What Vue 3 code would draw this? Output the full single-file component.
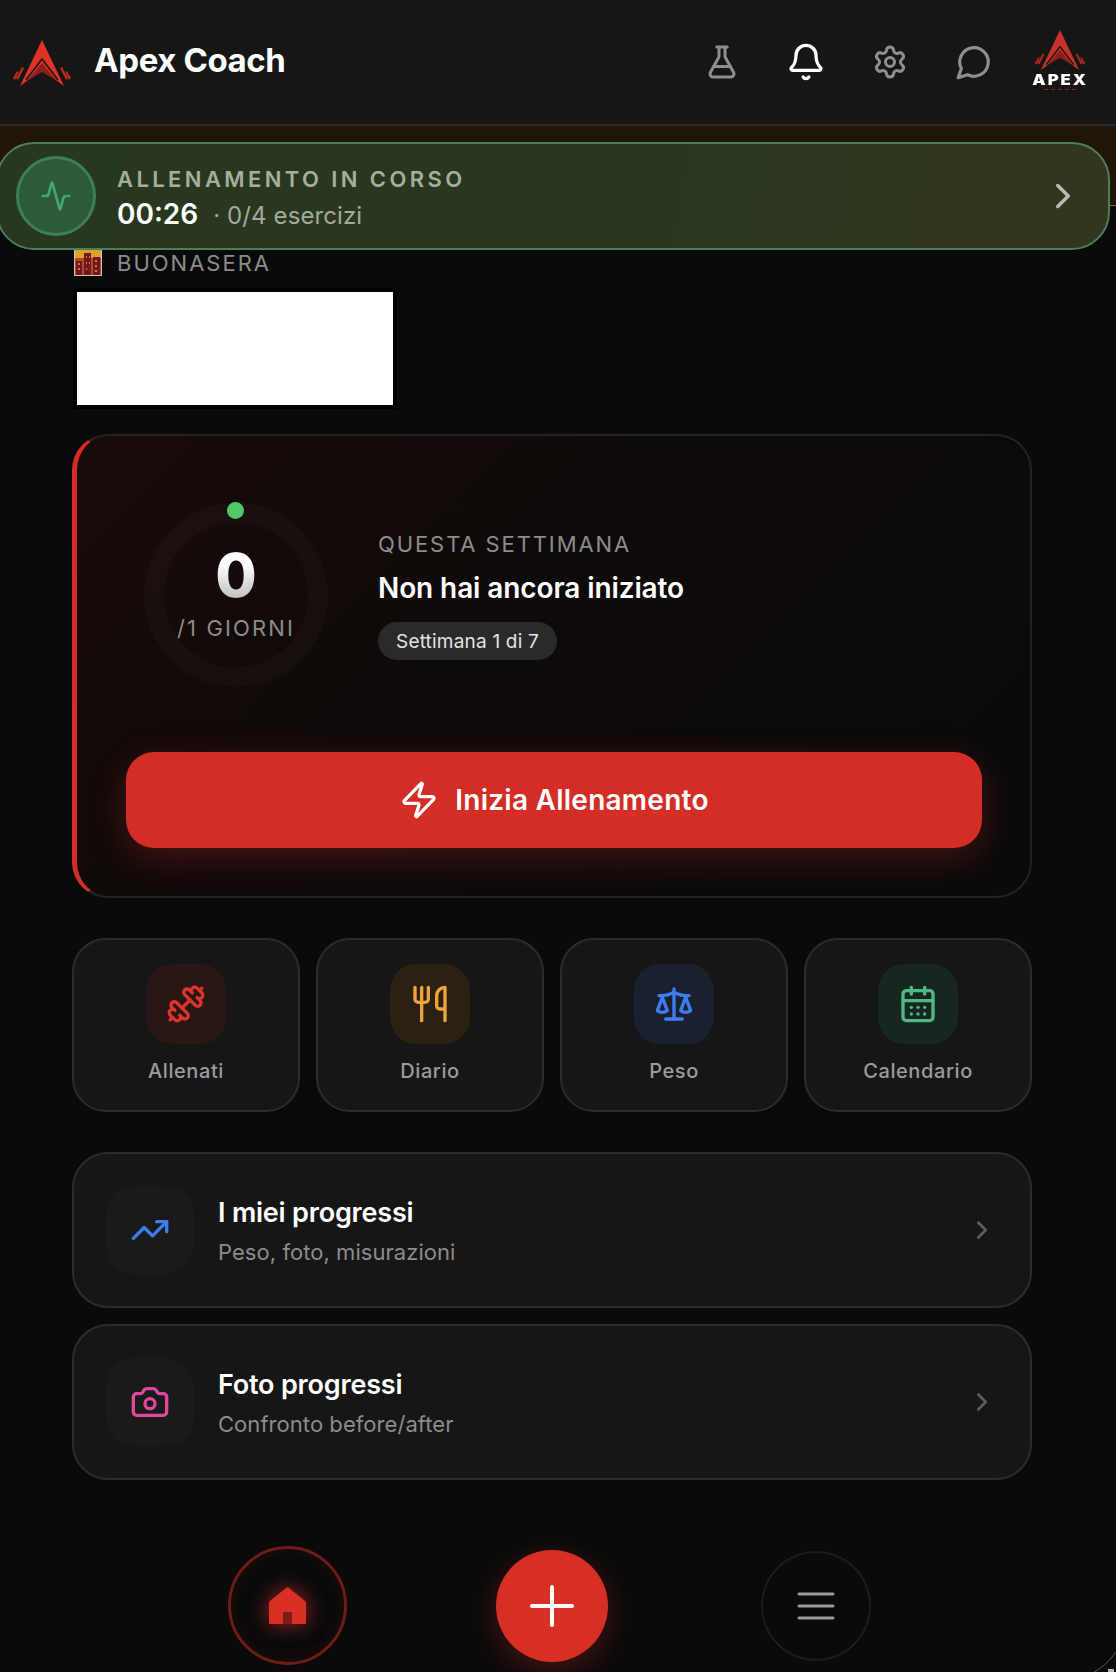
<template>
  <div class="page">
    <header class="topbar">
      <div class="brand">
        <svg class="brand-logo" viewBox="0 0 60 46">
          <path d="M30 0 L52 46 L30 30 L8 46 Z" fill="#dd3329" />
          <path d="M14 40 L30 19 L46 40" fill="none" stroke="#161616" stroke-width="1.6" />
          <path d="M30 23 L44 40 L30 32 L16 40 Z" fill="#8f1f18" />
          <path d="M10 27 L12 28 L6 40 L4 38 Z M5 31 L6.5 32 L3 40 L1 38 Z M50 27 L48 28 L54 40 L56 38 Z M55 31 L53.5 32 L57 40 L59 38 Z" fill="#b92a22" />
        </svg>
        <span class="brand-name">Apex Coach</span>
      </div>
      <div class="top-actions">
        <button v-for="a in topIcons" :key="a.name" class="top-btn">
          <svg :class="a.cls" :width="a.size" :height="a.size" viewBox="0 0 24 24" fill="none" stroke="currentColor" stroke-width="2" stroke-linecap="round" stroke-linejoin="round">
            <path v-for="d in a.paths" :key="d" :d="d" />
          </svg>
        </button>
        <div class="mini-logo">
          <svg viewBox="0 0 60 46" width="52" height="40">
            <path d="M30 0 L52 46 L30 30 L8 46 Z" fill="#c9322a" />
            <path d="M14 40 L30 19 L46 40" fill="none" stroke="#161616" stroke-width="1.6" />
            <path d="M30 23 L44 40 L30 32 L16 40 Z" fill="#8f1f18" />
            <path d="M10 27 L12 28 L6 40 L4 38 Z M5 31 L6.5 32 L3 40 L1 38 Z M50 27 L48 28 L54 40 L56 38 Z M55 31 L53.5 32 L57 40 L59 38 Z" fill="#a82820" />
          </svg>
          <span class="mini-name">APEX</span>
          <span class="mini-line"></span>
        </div>
      </div>
    </header>

    <div class="strip">
      <div class="live-banner">
        <div class="live-icon">
          <svg width="32" height="32" viewBox="0 0 24 24" fill="none" stroke="#45a56f" stroke-width="2" stroke-linecap="round" stroke-linejoin="round">
            <path d="M22 12h-2.48a2 2 0 0 0-1.93 1.46l-2.35 8.36a.25.25 0 0 1-.48 0L9.24 2.18a.25.25 0 0 0-.48 0l-2.35 8.36A2 2 0 0 1 4.49 12H2" />
          </svg>
        </div>
        <div class="live-text">
          <div class="live-title">ALLENAMENTO IN CORSO</div>
          <div class="live-meta">
            <span class="live-time">00:26</span>
            <span class="live-count">· 0/4 esercizi</span>
          </div>
        </div>
        <svg class="live-chevron" width="42" height="42" viewBox="0 0 24 24" fill="none" stroke="#b9bbb2" stroke-width="2" stroke-linecap="round" stroke-linejoin="round">
          <path d="m9 18 6-6-6-6" />
        </svg>
      </div>
    </div>

    <main class="content">
      <div class="greeting">
        <svg class="city" viewBox="0 0 28 26">
          <rect width="28" height="26" fill="#c9c8bb" />
          <rect x="1" y="0" width="26" height="25" fill="#e0a030" />
          <rect x="1" y="8" width="26" height="17" fill="#b5482a" />
          <path d="M2 11h6v14H2z M10 3h7v22h-7z M19 7h7v18h-7z" fill="#70191f" />
          <path d="M4 13h2v2H4z M4 18h2v2H4z M12 6h1v2h-1z M15 6h1v2h-1z M12 12h1v2h-1z M15 12h1v2h-1z M12 18h1v2h-1z M21 10h2v2h-2z M21 15h2v2h-2z M21 20h2v2h-2z" fill="#d9733a" />
        </svg>
        <span>BUONASERA</span>
      </div>
      <div class="name-block"></div>

      <section class="hero">
        <div class="hero-top">
          <div class="ring">
            <span class="ring-dot"></span>
            <div class="ring-num">0</div>
            <div class="ring-label">/1 GIORNI</div>
          </div>
          <div class="week">
            <div class="week-label">QUESTA SETTIMANA</div>
            <div class="week-title">Non hai ancora iniziato</div>
            <span class="week-pill">Settimana 1 di 7</span>
          </div>
        </div>
        <button class="start-btn">
          <svg width="40" height="40" viewBox="0 0 24 24" fill="none" stroke="currentColor" stroke-width="2" stroke-linecap="round" stroke-linejoin="round">
            <path d="M4 14a1 1 0 0 1-.78-1.63l9.9-10.2a.5.5 0 0 1 .86.46l-1.92 6.02A1 1 0 0 0 13 10h7a1 1 0 0 1 .78 1.63l-9.9 10.2a.5.5 0 0 1-.86-.46l1.92-6.02A1 1 0 0 0 11 14z" />
          </svg>
          Inizia Allenamento
        </button>
      </section>

      <section class="quick">
        <div v-for="q in quickItems" :key="q.label" class="quick-card">
          <div class="quick-icon" :style="{ background: q.bg, color: q.color }">
            <svg width="40" height="40" viewBox="0 0 24 24" fill="none" stroke="currentColor" stroke-width="2" stroke-linecap="round" stroke-linejoin="round">
              <g :transform="q.flip ? 'translate(24 0) scale(-1 1)' : null">
                <path v-for="d in q.paths" :key="d" :d="d" />
              </g>
            </svg>
          </div>
          <span class="quick-label">{{ q.label }}</span>
        </div>
      </section>

      <section class="rows">
        <div v-for="r in rows" :key="r.title" class="row-card">
          <div class="row-icon" :style="{ color: r.color }">
            <svg width="40" height="40" viewBox="0 0 24 24" fill="none" stroke="currentColor" stroke-width="2" stroke-linecap="round" stroke-linejoin="round">
              <path v-for="d in r.paths" :key="d" :d="d" />
            </svg>
          </div>
          <div class="row-text">
            <div class="row-title">{{ r.title }}</div>
            <div class="row-sub">{{ r.sub }}</div>
          </div>
          <svg class="row-chevron" width="30" height="30" viewBox="0 0 24 24" fill="none" stroke="#5f5f5f" stroke-width="2" stroke-linecap="round" stroke-linejoin="round">
            <path d="m9 18 6-6-6-6" />
          </svg>
        </div>
      </section>

      <nav class="bottom-nav">
        <button class="nav-home">
          <svg width="37" height="37" viewBox="0 0 37 37">
            <path d="M14 37V24h9v13z" fill="#7a1c18" />
            <path d="M17 1 a2 2 0 0 1 3 0 L36 14 a3 3 0 0 1 1 2 V36 a1 1 0 0 1-1 1 H23 V25 H14 V37 H1 a1 1 0 0 1-1-1 V16 a3 3 0 0 1 1-2 Z" fill="#d92f27" />
          </svg>
        </button>
        <button class="nav-plus">
          <svg width="48" height="48" viewBox="0 0 48 48" fill="none" stroke="#fff" stroke-width="4" stroke-linecap="round">
            <path d="M24 5v38M4 24h40" />
          </svg>
        </button>
        <button class="nav-menu">
          <svg width="38" height="28" viewBox="0 0 38 28" fill="none" stroke="#9a9a9a" stroke-width="3" stroke-linecap="round">
            <path d="M2 2h34M2 14h34M2 26h34" />
          </svg>
        </button>
      </nav>
    </main>

    <svg class="corner" width="24" height="22" viewBox="0 0 24 22" fill="none">
      <path d="M24 2 Q14 16 2 22" stroke="#5a5a5a" stroke-width="1" />
      <rect x="16" y="19" width="6" height="3" fill="#b5b5b5" />
    </svg>
  </div>
</template>

<script setup>
const gear = [
  'M9.671 4.136a2.34 2.34 0 0 1 4.659 0 2.34 2.34 0 0 0 3.319 1.915 2.34 2.34 0 0 1 2.33 4.033 2.34 2.34 0 0 0 0 3.831 2.34 2.34 0 0 1-2.33 4.033 2.34 2.34 0 0 0-3.319 1.915 2.34 2.34 0 0 1-4.659 0 2.34 2.34 0 0 0-3.32-1.915 2.34 2.34 0 0 1-2.33-4.033 2.34 2.34 0 0 0 0-3.831A2.34 2.34 0 0 1 6.35 6.051a2.34 2.34 0 0 0 3.319-1.915',
  'M15 12a3 3 0 1 1-6 0 3 3 0 0 1 6 0'
]

const topIcons = [
  {
    name: 'lab',
    size: 36,
    cls: 'dim',
    paths: [
      'M14 2v6a2 2 0 0 0 .245.96l5.51 10.08A2 2 0 0 1 18 22H6a2 2 0 0 1-1.755-2.96l5.51-10.08A2 2 0 0 0 10 8V2',
      'M6.453 15h11.094',
      'M8.5 2h7'
    ]
  },
  {
    name: 'bell',
    size: 40,
    cls: 'bright',
    paths: [
      'M10.268 21a2 2 0 0 0 3.464 0',
      'M3.262 15.326A1 1 0 0 0 4 17h16a1 1 0 0 0 .74-1.673C19.41 13.956 18 12.499 18 8A6 6 0 0 0 6 8c0 4.499-1.411 5.956-2.738 7.326'
    ]
  },
  { name: 'settings', size: 36, cls: 'dim', paths: gear },
  { name: 'chat', size: 38, cls: 'dim', paths: ['M7.9 20A9 9 0 1 0 4 16.1L2 22Z'] }
]

const quickItems = [
  {
    label: 'Allenati',
    bg: '#2a1615',
    color: '#d9352b',
    flip: true,
    paths: [
      'M14.4 14.4 9.6 9.6',
      'M18.657 21.485a2 2 0 1 1-2.829-2.828l-1.767 1.768a2 2 0 1 1-2.829-2.829l6.364-6.364a2 2 0 1 1 2.829 2.829l-1.768 1.767a2 2 0 1 1 2.828 2.829z',
      'm21.5 21.5-1.4-1.4',
      'M3.9 3.9 2.5 2.5',
      'M6.404 12.768a2 2 0 1 1-2.829-2.829l1.768-1.767a2 2 0 1 1-2.828-2.829l2.828-2.828a2 2 0 1 1 2.829 2.828l1.767-1.768a2 2 0 1 1 2.829 2.829z'
    ]
  },
  {
    label: 'Diario',
    bg: '#2a2113',
    color: '#f0a33a',
    paths: [
      'M3 2v7c0 1.1.9 2 2 2h4a2 2 0 0 0 2-2V2',
      'M7 2v20',
      'M21 15V2a5 5 0 0 0-5 5v6c0 1.1.9 2 2 2h3Zm0 0v7'
    ]
  },
  {
    label: 'Peso',
    bg: '#19202e',
    color: '#3f7cf0',
    paths: [
      'm16 16 3-8 3 8c-.87.65-1.92 1-3 1s-2.13-.35-3-1Z',
      'm2 16 3-8 3 8c-.87.65-1.92 1-3 1s-2.13-.35-3-1Z',
      'M7 21h10',
      'M12 3v18',
      'M3 7h2c2 0 5-1 7-2 2 1 5 2 7 2h2'
    ]
  },
  {
    label: 'Calendario',
    bg: '#182620',
    color: '#4fb883',
    paths: [
      'M8 2v4',
      'M16 2v4',
      'M5 4h14a2 2 0 0 1 2 2v14a2 2 0 0 1-2 2H5a2 2 0 0 1-2-2V6a2 2 0 0 1 2-2z',
      'M3 10h18',
      'M8 14h.01',
      'M12 14h.01',
      'M16 14h.01',
      'M8 18h.01',
      'M12 18h.01',
      'M16 18h.01'
    ]
  }
]

const rows = [
  {
    title: 'I miei progressi',
    sub: 'Peso, foto, misurazioni',
    color: '#3f7cf0',
    paths: ['M16 7h6v6', 'm22 7-8.5 8.5-5-5L2 17']
  },
  {
    title: 'Foto progressi',
    sub: 'Confronto before/after',
    color: '#e0479e',
    paths: [
      'M13.997 4a2 2 0 0 1 1.76 1.05l.486.9A2 2 0 0 0 18.003 7H20a2 2 0 0 1 2 2v9a2 2 0 0 1-2 2H4a2 2 0 0 1-2-2V9a2 2 0 0 1 2-2h1.997a2 2 0 0 0 1.759-1.048l.489-.904A2 2 0 0 1 10.004 4z',
      'M15 13a3 3 0 1 1-6 0 3 3 0 0 1 6 0'
    ]
  }
]
</script>

<style>
html, body {
  margin: 0;
  background: #0a0a0a;
}
</style>

<style scoped>
.page {
  position: relative;
  width: 1116px;
  height: 1672px;
  overflow: hidden;
  background: #0a0a0a;
  font-family: Inter, "Noto Sans", sans-serif;
  color: #fff;
}
button {
  border: none;
  background: none;
  padding: 0;
  font-family: inherit;
  cursor: pointer;
}

.topbar {
  height: 124px;
  display: flex;
  align-items: center;
  justify-content: space-between;
  padding: 0 29px 0 12px;
  background: #161616;
  border-bottom: 2px solid #2a2a2a;
}
.brand {
  display: flex;
  align-items: center;
  gap: 22px;
}
.brand-logo {
  width: 60px;
  height: 46px;
  margin-top: 1px;
}
.brand-name {
  margin-bottom: 4px;
  font-size: 33px;
  font-weight: 700;
  letter-spacing: -0.4px;
}
.top-actions {
  display: flex;
  align-items: center;
}
.top-btn {
  width: 84px;
  display: flex;
  justify-content: center;
  align-items: center;
}
.dim { color: #8e8e8e; }
.bright { color: #fff; }
.mini-logo {
  width: 54px;
  margin-left: 17px;
  margin-bottom: 4px;
  display: flex;
  flex-direction: column;
  align-items: center;
}
.mini-name {
  font-size: 14px;
  font-weight: 900;
  letter-spacing: 1.6px;
  line-height: 14px;
  margin-top: 3px;
  transform: scaleX(1.2);
}
.mini-line {
  width: 32px;
  height: 1px;
  margin-top: 2px;
  background: repeating-linear-gradient(90deg, #8f1f18 0 4px, transparent 4px 7px);
}

.strip {
  position: relative;
  height: 79px;
  background: #201608;
  border-bottom: 1px solid #9a6a20;
}
.live-banner {
  position: absolute;
  top: 16px;
  left: -4px;
  width: 1114px;
  height: 108px;
  box-sizing: border-box;
  display: flex;
  align-items: center;
  padding: 0 24px 0 18px;
  border: 2px solid #4a7f58;
  border-radius: 38px;
  background: linear-gradient(100deg, #28371f 0%, #2a3720 60%, #34351d 100%);
}
.live-icon {
  width: 80px;
  height: 80px;
  box-sizing: border-box;
  flex-shrink: 0;
  display: flex;
  align-items: center;
  justify-content: center;
  border: 3px solid #3a8058;
  border-radius: 50%;
  background: #2c5a3a;
}
.live-text {
  flex: 1;
  margin-left: 21px;
  padding-top: 5px;
}
.live-title {
  font-size: 22px;
  font-weight: 600;
  line-height: 28px;
  letter-spacing: 3.4px;
  color: #a8ad9f;
}
.live-meta {
  display: flex;
  align-items: baseline;
  gap: 15px;
  margin-top: 4px;
  line-height: 34px;
}
.live-time {
  font-size: 28px;
  font-weight: 600;
}
.live-count {
  font-size: 24px;
  letter-spacing: 0.1px;
  color: #a4a99c;
}

.content {
  padding: 44px 84px 0 72px;
}
.greeting {
  display: flex;
  align-items: center;
  gap: 15px;
  margin-left: 2px;
  height: 26px;
  font-size: 22px;
  line-height: 24px;
  letter-spacing: 2px;
  color: #8c8c8c;
}
.city {
  width: 28px;
  height: 26px;
}
.name-block {
  width: 316px;
  height: 113px;
  margin: 16px 0 29px 5px;
  background: #fff;
  box-shadow: 0 0 0 4px #000;
}

.hero {
  box-sizing: border-box;
  height: 464px;
  padding: 67px 48px 0 49px;
  border: 2px solid #232323;
  border-left: 5px solid #d32d25;
  border-radius: 36px;
  background: linear-gradient(135deg, #1a0b09 0%, #0e0a09 40%, #0a0a0a 100%);
}
.hero-top {
  display: flex;
  align-items: center;
  gap: 50px;
  margin-left: 18px;
}
.ring {
  position: relative;
  width: 184px;
  height: 184px;
  box-sizing: border-box;
  display: flex;
  flex-direction: column;
  align-items: center;
  justify-content: center;
  border: 20px solid rgba(255, 255, 255, 0.022);
  border-radius: 50%;
  background-clip: padding-box;
}
.ring-dot {
  position: absolute;
  top: -21px;
  left: 50%;
  width: 17px;
  height: 17px;
  margin-left: -9px;
  border-radius: 50%;
  background: #4fc76a;
}
.ring-num {
  font-size: 60px;
  font-weight: 800;
  line-height: 60px;
  margin-top: -4px;
  background: linear-gradient(180deg, #fff 30%, #b5b5b5 100%);
  -webkit-background-clip: text;
  background-clip: text;
  color: transparent;
}
.ring-label {
  margin-top: 9px;
  font-size: 22px;
  line-height: 28px;
  letter-spacing: 2.15px;
  white-space: nowrap;
  color: #8c8c8c;
}
.week-label {
  font-size: 22px;
  line-height: 28px;
  letter-spacing: 1.9px;
  color: #8c8c8c;
}
.week-title {
  margin-top: 12px;
  font-size: 28px;
  font-weight: 600;
  line-height: 36px;
  letter-spacing: -0.1px;
}
.week-pill {
  display: inline-flex;
  align-items: center;
  height: 38px;
  margin-top: 16px;
  padding: 0 18px;
  border-radius: 19px;
  background: #2a2a2a;
  font-size: 19px;
  letter-spacing: 0.2px;
  color: #e4e4e4;
}
.start-btn {
  width: 100%;
  height: 96px;
  margin-top: 65px;
  display: flex;
  align-items: center;
  justify-content: center;
  gap: 16px;
  border-radius: 28px;
  background: #d32d25;
  color: #fff;
  font-size: 28px;
  font-weight: 600;
  letter-spacing: 0.25px;
  box-shadow: 0 10px 34px rgba(211, 45, 37, 0.28);
}

.quick {
  display: grid;
  grid-template-columns: repeat(4, 1fr);
  gap: 16px;
  margin-top: 40px;
}
.quick-card {
  height: 174px;
  box-sizing: border-box;
  display: flex;
  flex-direction: column;
  align-items: center;
  padding-top: 24px;
  border: 2px solid #2c2c2c;
  border-radius: 34px;
  background: #161616;
}
.quick-icon {
  width: 80px;
  height: 80px;
  display: flex;
  align-items: center;
  justify-content: center;
  border-radius: 26px;
}
.quick-label {
  margin-top: 14px;
  font-size: 20px;
  font-weight: 500;
  line-height: 26px;
  letter-spacing: 0.6px;
  color: #9c9c9c;
}

.rows {
  display: flex;
  flex-direction: column;
  gap: 16px;
  margin-top: 40px;
}
.row-card {
  height: 156px;
  box-sizing: border-box;
  display: flex;
  align-items: center;
  padding: 0 32px;
  border: 2px solid #2c2c2c;
  border-radius: 36px;
  background: #161616;
}
.row-icon {
  width: 88px;
  height: 88px;
  flex-shrink: 0;
  display: flex;
  align-items: center;
  justify-content: center;
  border-radius: 28px;
  background: #1a1a1a;
}
.row-text {
  flex: 1;
  margin-left: 24px;
}
.row-title {
  font-size: 27px;
  font-weight: 600;
  line-height: 36px;
  letter-spacing: -0.2px;
}
.row-sub {
  margin-top: 7px;
  font-size: 22px;
  line-height: 28px;
  letter-spacing: 0.05px;
  color: #8c8c8c;
}
.row-chevron {
  margin-right: 1px;
}

.bottom-nav {
  display: flex;
  align-items: center;
  gap: 149px;
  margin-top: 66px;
  padding-left: 156px;
}
.nav-home {
  width: 119px;
  height: 119px;
  box-sizing: border-box;
  display: flex;
  align-items: center;
  justify-content: center;
  border: 3px solid #6e1c18;
  border-radius: 50%;
  box-shadow: inset 0 0 18px rgba(211, 45, 37, 0.1);
}
.nav-home svg {
  filter: drop-shadow(0 0 10px rgba(217, 47, 39, 0.75));
}
.nav-plus {
  width: 112px;
  height: 112px;
  display: flex;
  align-items: center;
  justify-content: center;
  border-radius: 50%;
  background: #d72f26;
  box-shadow: 0 8px 30px rgba(211, 45, 37, 0.3);
}
.nav-menu {
  width: 110px;
  height: 110px;
  box-sizing: border-box;
  display: flex;
  align-items: center;
  justify-content: center;
  margin-left: 4px;
  border: 2px solid #1c1c1c;
  border-radius: 50%;
}
.corner {
  position: absolute;
  right: 0;
  bottom: 0;
}
</style>
